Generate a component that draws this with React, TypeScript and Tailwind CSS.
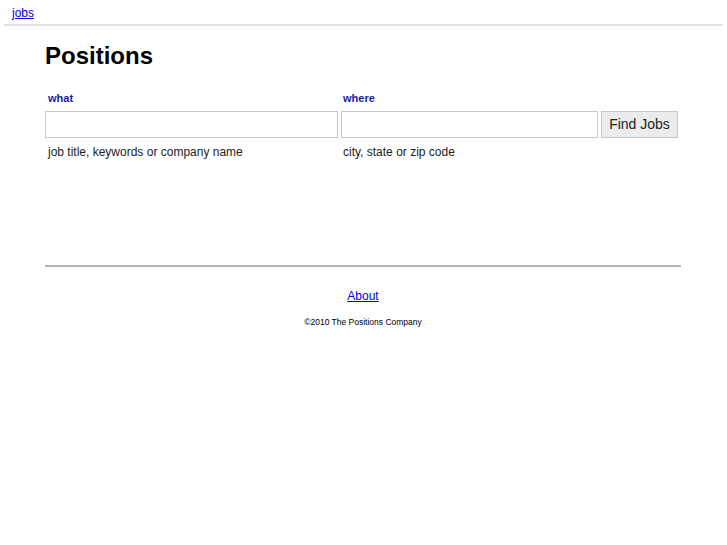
export default function App() {
  return (
    <div className="min-h-screen bg-white text-[#222] font-['Liberation_Sans',Arial,sans-serif]">
      {/* top bar */}
      <div className="mx-[4px] h-[26px] border-b-2 border-[#e3e3e3] pl-[8px] pt-[5px] leading-[14px]">
        <a href="#" className="text-[12px] leading-[14px] text-[#0000ee] underline">
          jobs
        </a>
      </div>

      <div className="mx-[45px]">
        <h1 className="mt-[16px] text-[24px] font-bold leading-[28px] text-black">Positions</h1>

        <form className="mt-[22px] flex gap-[3px]" onSubmit={(e) => e.preventDefault()}>
          <div className="flex w-[293px] flex-col">
            <label className="pl-[3px] text-[11px] font-bold leading-[13px] text-[#1a1aa6]">what</label>
            <input
              type="text"
              className="mt-[6px] h-[27px] w-full border border-[#c8c8c8] bg-white px-1 text-[13px] outline-none"
            />
            <span className="mt-[7px] pl-[3px] text-[12px] leading-[14px]">
              job title, keywords or company name
            </span>
          </div>
          <div className="flex w-[257px] flex-col">
            <label className="pl-[2px] text-[11px] font-bold leading-[13px] text-[#1a1aa6]">where</label>
            <input
              type="text"
              className="mt-[6px] h-[27px] w-full border border-[#c8c8c8] bg-white px-1 text-[13px] outline-none"
            />
            <span className="mt-[7px] pl-[2px] text-[12px] leading-[14px]">city, state or zip code</span>
          </div>
          <div className="flex flex-col">
            <div className="h-[13px]" />
            <button
              type="submit"
              className="mt-[6px] h-[27px] w-[77px] border border-[#c8c8c8] bg-[#ececec] text-[14px] text-[#222]"
            >
              Find Jobs
            </button>
          </div>
        </form>

        <div className="mt-[106px] w-[636px] border-t-2 border-t-[#b4b4b4]" />

        <div className="w-[636px] text-center">
          <a href="#" className="mt-[22px] inline-block text-[12px] leading-[14px] text-[#0000ee] underline">
            About
          </a>
          <p className="mt-[10px] text-[8.5px] leading-[10px] text-black">©2010 The Positions Company</p>
        </div>
      </div>
    </div>
  )
}
